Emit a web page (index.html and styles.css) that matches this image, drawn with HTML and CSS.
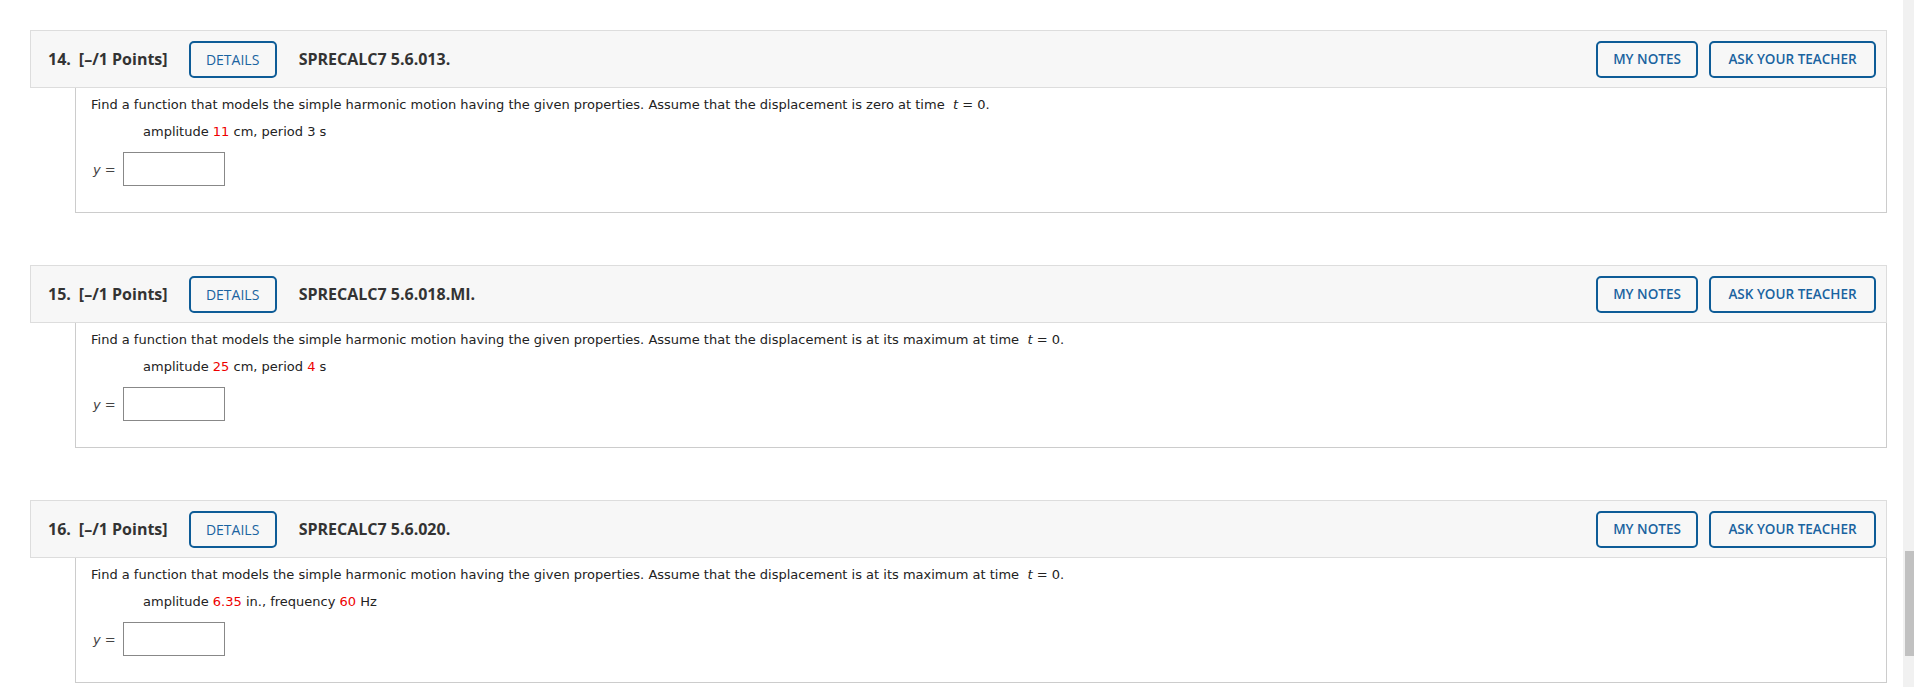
FILE: index.html
```html
<!DOCTYPE html>
<html lang="en">
<head>
<meta charset="utf-8">
<title>Questions</title>
<link rel="stylesheet" href="styles.css">
</head>
<body>
<div class="page">
  <main class="main">
    <section class="question">
      <div class="qhead">
        <span class="qnum">14.</span>
        <span class="qpts">[–/1 Points]</span>
        <button class="btn btn-details">DETAILS</button>
        <span class="qcode">SPRECALC7 5.6.013.</span>
        <span class="spacer"></span>
        <button class="btn btn-right btn-notes">MY NOTES</button>
        <button class="btn btn-right btn-ask">ASK YOUR TEACHER</button>
      </div>
      <div class="qbody">
        <p class="prompt">Find a function that models the simple harmonic motion having the given properties. Assume that the displacement is zero at time&nbsp; <i>t</i> = 0.</p>
        <p class="given">amplitude <span class="red">11</span> cm, period 3 s</p>
        <div class="answer"><span class="var"><i>y</i> =</span><span class="box"></span></div>
      </div>
    </section>
    <section class="question">
      <div class="qhead">
        <span class="qnum">15.</span>
        <span class="qpts">[–/1 Points]</span>
        <button class="btn btn-details">DETAILS</button>
        <span class="qcode">SPRECALC7 5.6.018.MI.</span>
        <span class="spacer"></span>
        <button class="btn btn-right btn-notes">MY NOTES</button>
        <button class="btn btn-right btn-ask">ASK YOUR TEACHER</button>
      </div>
      <div class="qbody">
        <p class="prompt">Find a function that models the simple harmonic motion having the given properties. Assume that the displacement is at its maximum at time&nbsp; <i>t</i> = 0.</p>
        <p class="given">amplitude <span class="red">25</span> cm, period <span class="red">4</span> s</p>
        <div class="answer"><span class="var"><i>y</i> =</span><span class="box"></span></div>
      </div>
    </section>
    <section class="question">
      <div class="qhead">
        <span class="qnum">16.</span>
        <span class="qpts">[–/1 Points]</span>
        <button class="btn btn-details">DETAILS</button>
        <span class="qcode">SPRECALC7 5.6.020.</span>
        <span class="spacer"></span>
        <button class="btn btn-right btn-notes">MY NOTES</button>
        <button class="btn btn-right btn-ask">ASK YOUR TEACHER</button>
      </div>
      <div class="qbody">
        <p class="prompt">Find a function that models the simple harmonic motion having the given properties. Assume that the displacement is at its maximum at time&nbsp; <i>t</i> = 0.</p>
        <p class="given">amplitude <span class="red">6.35</span> in., frequency <span class="red">60</span> Hz</p>
        <div class="answer"><span class="var"><i>y</i> =</span><span class="box"></span></div>
      </div>
    </section>
  </main>
  <div class="scrollbar"><div class="thumb"></div></div>
</div>
</body>
</html>
```

FILE: styles.css
```css
html, body {
  margin: 0;
  padding: 0;
  height: 687px;
  overflow: hidden;
  background: #ffffff;
}

.page {
  display: flex;
  height: 687px;
}

.main {
  flex: 1;
  padding: 30px 16px 0 30px;
}

.question {
  margin-bottom: 52px;
}

.qhead {
  display: flex;
  align-items: center;
  height: 56px;
  border: 1px solid #dddddd;
  background: #f7f7f7;
  padding: 0 10px 0 17px;
  font-family: "Open Sans", "Liberation Sans", sans-serif;
  font-weight: 700;
  font-size: 16px;
  color: #333333;
}

.qnum {
  margin-right: 8px;
}

.qpts {
  margin-right: 21px;
}

.qcode {
  margin-left: 22px;
}

.spacer {
  flex: 1;
}

.btn {
  font-family: "Open Sans", "Liberation Sans", sans-serif;
  font-size: 13.5px;
  color: #1a63a0;
  background: #f7f7f7;
  border: 2px solid #0e5c97;
  border-radius: 5px;
  height: 37px;
  padding: 0;
  text-align: center;
}

.btn-details {
  width: 88px;
  font-size: 14px;
  font-weight: 400;
}

.btn-right {
  font-weight: 600;
}

.btn-notes {
  width: 102px;
  margin-right: 11px;
}

.btn-ask {
  width: 167px;
}

.qbody {
  margin-left: 45px;
  border: 1px solid #cccccc;
  border-top: none;
  padding: 8px 15px 26px 15px;
  font-family: "DejaVu Sans", Verdana, sans-serif;
  font-size: 13px;
  color: #222222;
}

.prompt {
  margin: 0;
  line-height: 17px;
}

.given {
  margin: 10px 0 0 52px;
  line-height: 17px;
}

.red {
  color: #ee0000;
}

.answer {
  display: flex;
  align-items: center;
  margin-top: 12px;
}

.var {
  color: #444444;
  margin-left: 2px;
  margin-right: 7px;
}

.box {
  display: block;
  width: 100px;
  height: 32px;
  border: 1px solid #888888;
  background: #ffffff;
}

.scrollbar {
  width: 11px;
  background: #f1f1f1;
  padding-top: 551px;
  box-sizing: border-box;
}

.thumb {
  width: 9px;
  margin-left: 2px;
  height: 105px;
  background: #c1c1c1;
}
```
